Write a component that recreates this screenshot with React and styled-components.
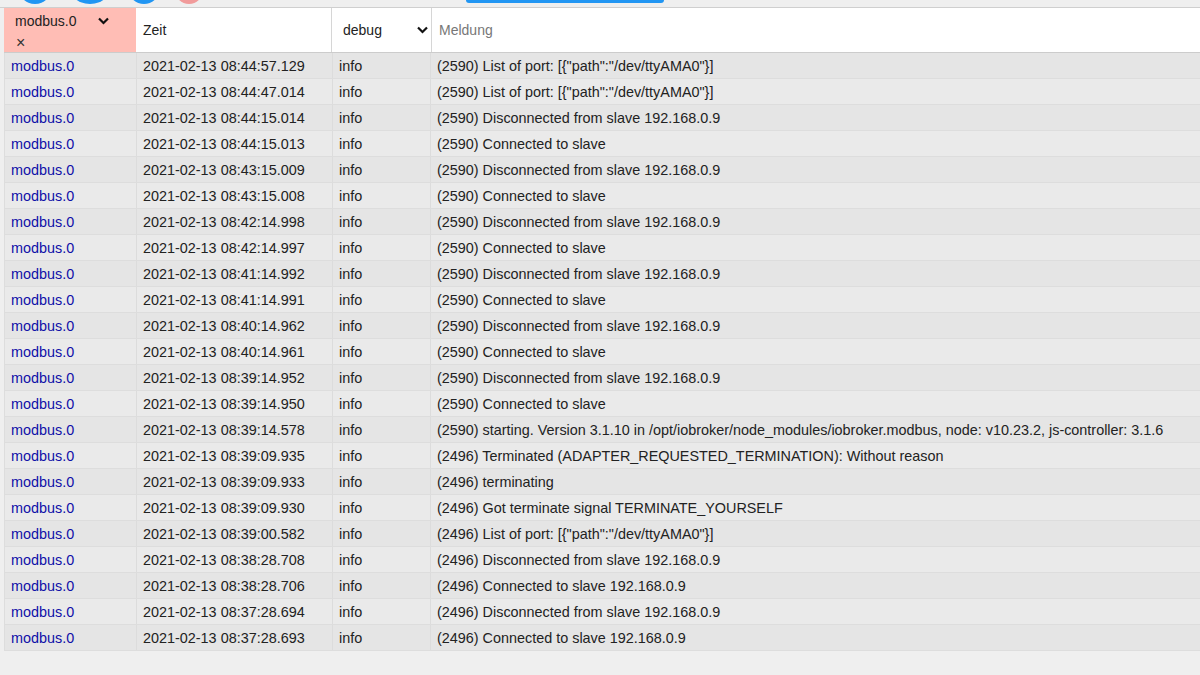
import styled, { createGlobalStyle } from 'styled-components';

const GlobalStyle = createGlobalStyle`
  html, body {
    margin: 0;
    padding: 0;
    background: #efefef;
    font-family: 'Liberation Sans', Arial, sans-serif;
    font-size: 14px;
    color: #222;
  }
`;

const Page = styled.div`
  width: 1200px;
  height: 675px;
  overflow: hidden;
  background: #efefef;
`;

const Toolbar = styled.div`
  display: flex;
  align-items: flex-end;
  height: 7px;
  overflow: hidden;
  border-bottom: 1px solid #cfcfcf;
  padding-left: 18px;
`;

const Fab = styled.div`
  flex: none;
  width: ${(p) => p.size}px;
  height: ${(p) => p.size}px;
  margin-left: ${(p) => p.gap}px;
  margin-bottom: 3px;
  border-radius: 50%;
  background: ${(p) => (p.pink ? '#f19b9b' : '#2196f3')};
`;

const BarButton = styled.div`
  flex: none;
  width: 198px;
  height: 30px;
  margin-left: 263px;
  margin-bottom: 4px;
  border-radius: 3px;
  background: #2196f3;
`;

const Table = styled.div`
  margin-left: 4px;
`;

const HeadRow = styled.div`
  display: grid;
  grid-template-columns: 132px 196px 100px 1fr;
  height: 44px;
  background: #fff;
  border-bottom: 1px solid #cccccc;
`;

const HeadCell = styled.div`
  display: flex;
  align-items: center;
  padding-left: ${(p) => p.pad || 7}px;
  border-right: 1px solid #d6d6d6;
  color: ${(p) => (p.muted ? '#777' : '#222')};
  font-size: 14px;
  &:last-child {
    border-right: none;
  }
`;

const FilterCell = styled.div`
  background: #ffbdb5;
  padding: 5px 0 0 11px;
  display: flex;
  flex-direction: column;
  font-size: 14px;
`;

const FilterTop = styled.div`
  display: flex;
  align-items: center;
  justify-content: space-between;
  padding-right: 27px;
  height: 16px;
`;

const Clear = styled.span`
  margin-top: 6px;
  margin-left: 1px;
  font-size: 16px;
  line-height: 16px;
  color: #333;
`;

const Select = styled.div`
  display: flex;
  align-items: center;
  justify-content: space-between;
  width: 100%;
  padding-right: 3px;
`;

const Chevron = () => (
  <svg width="11" height="8" viewBox="0 0 11 8">
    <path d="M1 1.5 L5.5 6 L10 1.5" fill="none" stroke="#111" strokeWidth="2.2" />
  </svg>
);

const Row = styled.div`
  display: grid;
  grid-template-columns: 132px 196px 98px 1fr;
  height: 26px;
  background: ${(p) => (p.odd ? '#e5e5e5' : '#eaeaea')};
  border-bottom: 1px solid #dddddd;
  box-sizing: border-box;
  border-left: 1px solid #dddddd;
`;

const Cell = styled.div`
  display: flex;
  align-items: center;
  padding-left: ${(p) => p.pad || 6}px;
  border-right: 1px solid #dcdcdc;
  color: ${(p) => (p.src ? '#1010a8' : '#222')};
  font-size: 14.4px;
  white-space: nowrap;
  &:last-child {
    border-right: none;
  }
`;

const logs = [
  ['08:44:57.129', '(2590) List of port: [{"path":"/dev/ttyAMA0"}]'],
  ['08:44:47.014', '(2590) List of port: [{"path":"/dev/ttyAMA0"}]'],
  ['08:44:15.014', '(2590) Disconnected from slave 192.168.0.9'],
  ['08:44:15.013', '(2590) Connected to slave'],
  ['08:43:15.009', '(2590) Disconnected from slave 192.168.0.9'],
  ['08:43:15.008', '(2590) Connected to slave'],
  ['08:42:14.998', '(2590) Disconnected from slave 192.168.0.9'],
  ['08:42:14.997', '(2590) Connected to slave'],
  ['08:41:14.992', '(2590) Disconnected from slave 192.168.0.9'],
  ['08:41:14.991', '(2590) Connected to slave'],
  ['08:40:14.962', '(2590) Disconnected from slave 192.168.0.9'],
  ['08:40:14.961', '(2590) Connected to slave'],
  ['08:39:14.952', '(2590) Disconnected from slave 192.168.0.9'],
  ['08:39:14.950', '(2590) Connected to slave'],
  ['08:39:14.578', '(2590) starting. Version 3.1.10 in /opt/iobroker/node_modules/iobroker.modbus, node: v10.23.2, js-controller: 3.1.6'],
  ['08:39:09.935', '(2496) Terminated (ADAPTER_REQUESTED_TERMINATION): Without reason'],
  ['08:39:09.933', '(2496) terminating'],
  ['08:39:09.930', '(2496) Got terminate signal TERMINATE_YOURSELF'],
  ['08:39:00.582', '(2496) List of port: [{"path":"/dev/ttyAMA0"}]'],
  ['08:38:28.708', '(2496) Disconnected from slave 192.168.0.9'],
  ['08:38:28.706', '(2496) Connected to slave 192.168.0.9'],
  ['08:37:28.694', '(2496) Disconnected from slave 192.168.0.9'],
  ['08:37:28.693', '(2496) Connected to slave 192.168.0.9'],
];

export default function App() {
  return (
    <Page>
      <GlobalStyle />
      <Toolbar>
        <Fab size={34} gap={0} />
        <Fab size={48} gap={14} />
        <Fab size={32} gap={14} />
        <Fab size={28} gap={15} pink />
        <BarButton />
      </Toolbar>
      <Table>
        <HeadRow>
          <FilterCell>
            <FilterTop>
              <span>modbus.0</span>
              <Chevron />
            </FilterTop>
            <Clear>×</Clear>
          </FilterCell>
          <HeadCell>Zeit</HeadCell>
          <HeadCell pad={11}>
            <Select>
              <span>debug</span>
              <Chevron />
            </Select>
          </HeadCell>
          <HeadCell muted>Meldung</HeadCell>
        </HeadRow>
        {logs.map(([time, msg], i) => (
          <Row key={i} odd={i % 2 === 0}>
            <Cell src>modbus.0</Cell>
            <Cell>2021-02-13 {time}</Cell>
            <Cell>info</Cell>
            <Cell>{msg}</Cell>
          </Row>
        ))}
      </Table>
    </Page>
  );
}
